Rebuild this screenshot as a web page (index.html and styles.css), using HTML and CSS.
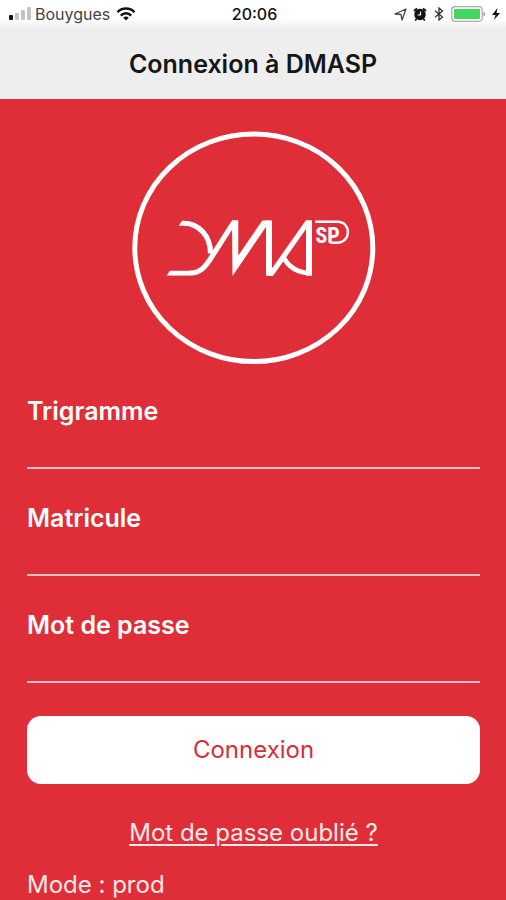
FILE: index.html
```html
<!DOCTYPE html>
<html lang="fr">
<head>
<meta charset="utf-8">
<meta name="viewport" content="width=device-width, initial-scale=1">
<title>Connexion à DMASP</title>
<link rel="stylesheet" href="styles.css">
</head>
<body>
<div class="status">
  <div class="status-side">
    <svg class="signal" width="24" height="14" viewBox="0 0 24 14" aria-hidden="true">
      <rect x="0" y="8" width="4" height="5" rx="1" fill="#111"/>
      <rect x="6" y="6" width="4" height="7" rx="1" fill="#c4c4c4"/>
      <rect x="12" y="3" width="4" height="10" rx="1" fill="#c4c4c4"/>
      <rect x="18" y="0" width="4" height="13" rx="1" fill="#c4c4c4"/>
    </svg>
    <span class="carrier">Bouygues</span>
    <svg class="wifi" width="20" height="14" viewBox="0 0 20 14" fill="none" stroke="#111" stroke-width="2.4" aria-hidden="true">
      <path d="M1.5 5.2C6 .3 14 .3 18.500 5.200"/>
      <path d="M4.800 8.600C7.600 5.500 12.400 5.500 15.200 8.600"/>
      <path d="M10 13.500L7.200 10.700Q10 8.500 12.800 10.700Z" fill="#111" stroke="none"/>
    </svg>
  </div>
  <time class="clock">20:06</time>
  <div class="status-side status-right">
    <svg width="13" height="13" viewBox="0 0 13 13" fill="none" stroke="#444" stroke-width="1.3" stroke-linejoin="round" aria-hidden="true">
      <path d="M12 1L1 6L7 6.500L8 12Z"/>
    </svg>
    <svg width="14" height="14" viewBox="0 0 14 14" aria-hidden="true">
      <circle cx="7" cy="7.500" r="5.700" fill="#111"/>
      <path d="M1 4L4 1.300M13 4L10 1.300M3.500 12L2.200 13.500M10.500 12L11.800 13.500" stroke="#111" stroke-width="1.800"/>
      <path d="M7.500 4.500V8H4.500" fill="none" stroke="#fff" stroke-width="1.200"/>
    </svg>
    <svg width="12" height="14" viewBox="0 0 12 14" fill="none" stroke="#333" stroke-width="1.300" aria-hidden="true">
      <path d="M2 3.800L9.500 10L6 13V1L9.500 4L2 10.200"/>
    </svg>
    <svg width="35" height="16" viewBox="0 0 35 16" aria-hidden="true">
      <rect x=".7" y=".7" width="30.600" height="14.600" rx="3.500" fill="#fff" stroke="#aaa" stroke-width="1.200"/>
      <rect x="3" y="3" width="26" height="10" rx="1" fill="#43d65c"/>
      <path d="M32.500 5.500Q36 8 32.500 10.500Z" fill="#999"/>
    </svg>
    <svg width="8" height="14" viewBox="0 0 8 14" aria-hidden="true">
      <path d="M5.500 1L0 8H3.500L2 13L8 6H4.500Z" fill="#111"/>
    </svg>
  </div>
</div>
<header class="bar"><h1>Connexion à DMASP</h1></header>
<main>
  <svg class="logo" width="244" height="234" viewBox="132 130.500 244 234" fill="none" stroke="#fff" role="img" aria-label="DMA SP">
    <clipPath id="band"><path d="M182 220H312V275.300H166.500L170 270H190V226H178.300Z"/></clipPath>
    <ellipse cx="253.800" cy="247.300" rx="119" ry="113.800" stroke-width="5"/>
    <g clip-path="url(#band)" stroke-width="5.200">
      <path d="M176 222.600H183C199 223 210.500 235 210.500 253"/>
      <path d="M164 272.700H190C201 272.700 205.500 265.500 210 259L237.500 216"/>
      <path d="M232 219H238.300V255L263 219H269V222L232.500 275.500Z" fill="#fff" stroke="none"/>
      <path d="M269 219V276M309 219V276" stroke-width="6"/>
      <path d="M267 279.500L312 215.500"/>
      <path d="M283 256C288 266 297 272 310 272.700" stroke-width="5"/>
    </g>
    <path d="M315 221.200H337.500C351.500 221.200 351.500 242.200 337 242.200H330" stroke-width="2.500"/>
    <text class="logo-sup" x="315.500" y="242.800">SP</text>
  </svg>
  <form>
    <div class="field"><label for="trigramme">Trigramme</label><input id="trigramme" type="text"></div>
    <div class="field"><label for="matricule">Matricule</label><input id="matricule" type="text"></div>
    <div class="field"><label for="passe">Mot de passe</label><input id="passe" type="password"></div>
    <button type="submit">Connexion</button>
  </form>
  <a class="forgot" href="#">Mot de passe oublié ?</a>
  <p class="mode">Mode : prod</p>
</main>
</body>
</html>
```
FILE: styles.css
```css
* { box-sizing: border-box; }

body {
  margin: 0;
  min-height: 100vh;
  display: flex;
  flex-direction: column;
  background: #e02e38;
  color: #fff;
  font-family: Inter, Roboto, sans-serif;
  font-size: 24px;
  line-height: 32px;
}

.status {
  display: grid;
  grid-template-columns: 1fr auto 1fr;
  align-items: center;
  height: 28px;
  padding: 0 6px 0 9px;
  background: linear-gradient(#fff 70%, #eee);
  color: #111;
  font-size: 16px;
  line-height: 28px;
}

.status-side {
  display: flex;
  align-items: center;
  gap: 2px;
}

.carrier { color: #444; }
.wifi { margin-left: 4px; }
.status-right { justify-content: flex-end; gap: 6px; }
.clock { font-weight: 500; }

.bar {
  height: 71px;
  padding-top: 20px;
  background: #eee;
  color: #161616;
  text-align: center;
}

h1 {
  margin: 0;
  font-size: 25px;
  font-weight: 600;
  line-height: 32px;
}

main {
  display: flex;
  flex-direction: column;
  padding: 32px 26px 0 27px;
}

.logo { align-self: center; }

.logo-sup {
  fill: #fff;
  stroke: none;
  font-family: "Liberation Sans Narrow", "Roboto Condensed", "Liberation Sans", sans-serif;
  font-size: 22px;
  font-weight: 700;
}

form {
  display: flex;
  flex-direction: column;
  padding-top: 30px;
}

.field {
  display: flex;
  flex-direction: column;
  height: 107px;
}

label {
  font-size: 25px;
  font-weight: 600;
}

input {
  width: 100%;
  height: 42px;
  padding: 0;
  border: 0;
  border-bottom: 2px solid #fbc3c5;
  border-radius: 0;
  outline: 0;
  background: transparent;
  color: #fff;
  font: inherit;
}

button {
  height: 68px;
  padding: 0;
  border: 0;
  border-radius: 14px;
  background: #fff;
  color: #d62f38;
  font: inherit;
}

.forgot {
  align-self: center;
  margin-top: 33px;
  color: #ffe9e9;
  text-decoration-thickness: 2px;
  text-underline-offset: 3px;
}

.mode {
  margin: 20px 0 0;
  color: #ffe9e9;
}
```
